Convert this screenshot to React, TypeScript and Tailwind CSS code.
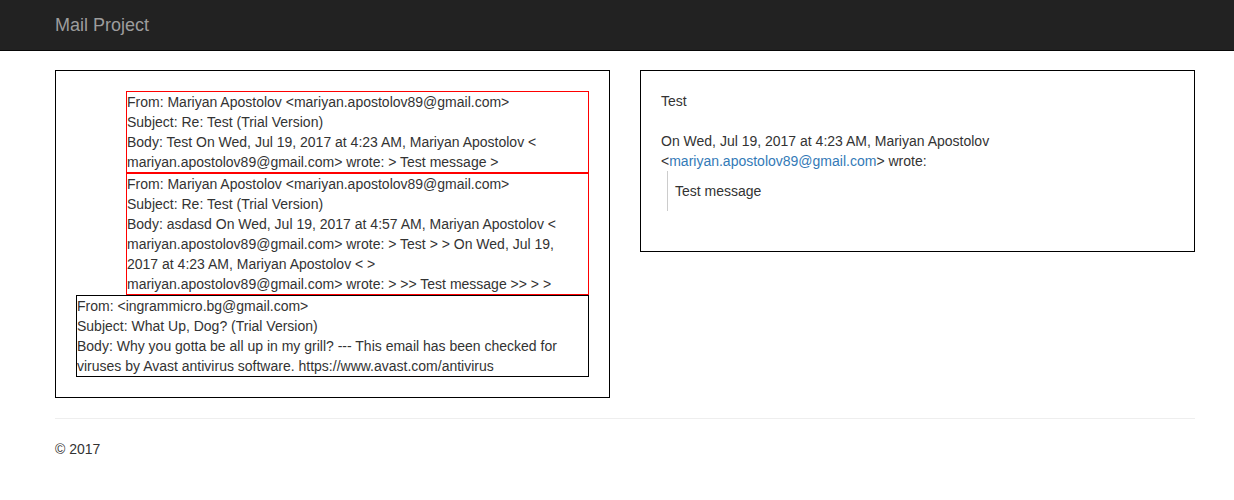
import React from "react";

type Mail = {
  from: string;
  subject: string;
  body: string;
  reply?: boolean;
};

const mails: Mail[] = [
  {
    from: "Mariyan Apostolov <mariyan.apostolov89@gmail.com>",
    subject: "Re: Test (Trial Version)",
    body: "Test On Wed, Jul 19, 2017 at 4:23 AM, Mariyan Apostolov < mariyan.apostolov89@gmail.com> wrote: > Test message >",
    reply: true,
  },
  {
    from: "Mariyan Apostolov <mariyan.apostolov89@gmail.com>",
    subject: "Re: Test (Trial Version)",
    body: "asdasd On Wed, Jul 19, 2017 at 4:57 AM, Mariyan Apostolov < mariyan.apostolov89@gmail.com> wrote: > Test > > On Wed, Jul 19, 2017 at 4:23 AM, Mariyan Apostolov < > mariyan.apostolov89@gmail.com> wrote: > >> Test message >> > >",
    reply: true,
  },
  {
    from: "<ingrammicro.bg@gmail.com>",
    subject: "What Up, Dog? (Trial Version)",
    body: "Why you gotta be all up in my grill? --- This email has been checked for viruses by Avast antivirus software. https://www.avast.com/antivirus",
  },
];

const MailItem = ({ mail }: { mail: Mail }) => (
  <div
    className={
      mail.reply
        ? "ml-[50px] border border-[#ff0000] cursor-pointer"
        : "border border-black cursor-pointer"
    }
  >
    <div>From: {mail.from}</div>
    <div>Subject: {mail.subject}</div>
    <div>Body: {mail.body}</div>
  </div>
);

export default function App() {
  return (
    <div className="min-h-screen bg-white text-[14px] leading-5 text-[#333] font-['Liberation_Sans',Arial,sans-serif]">
      <nav className="h-[51px] bg-[#222] border-b border-[#080808]">
        <div className="pl-[55px] h-[50px] flex items-center">
          <span className="text-[18px] leading-5 text-[#9d9d9d] -mt-px">Mail Project</span>
        </div>
      </nav>

      <div className="pl-[55px] pt-[19px]">
        <div className="w-[1140px]">
          <div className="flex gap-[30px] items-start">
            <div className="w-[555px] border border-black p-5">
              {mails.map((m, i) => (
                <MailItem key={i} mail={m} />
              ))}
            </div>

            <div className="w-[555px] border border-black p-5">
              <div>Test</div>
              <div className="h-5" />
              <div>
                On Wed, Jul 19, 2017 at 4:23 AM, Mariyan Apostolov
                <br />
                &lt;<a className="text-[#337ab7]">mariyan.apostolov89@gmail.com</a>&gt; wrote:
              </div>
              <blockquote className="ml-[6px] mb-5 border-l border-[#ccc] pl-[7px] py-[10px]">
                Test message
              </blockquote>
            </div>
          </div>

          <hr className="mt-5 mb-5 border-t border-[#eee]" />

          <footer>
            <p>© 2017</p>
          </footer>
        </div>
      </div>
    </div>
  );
}
